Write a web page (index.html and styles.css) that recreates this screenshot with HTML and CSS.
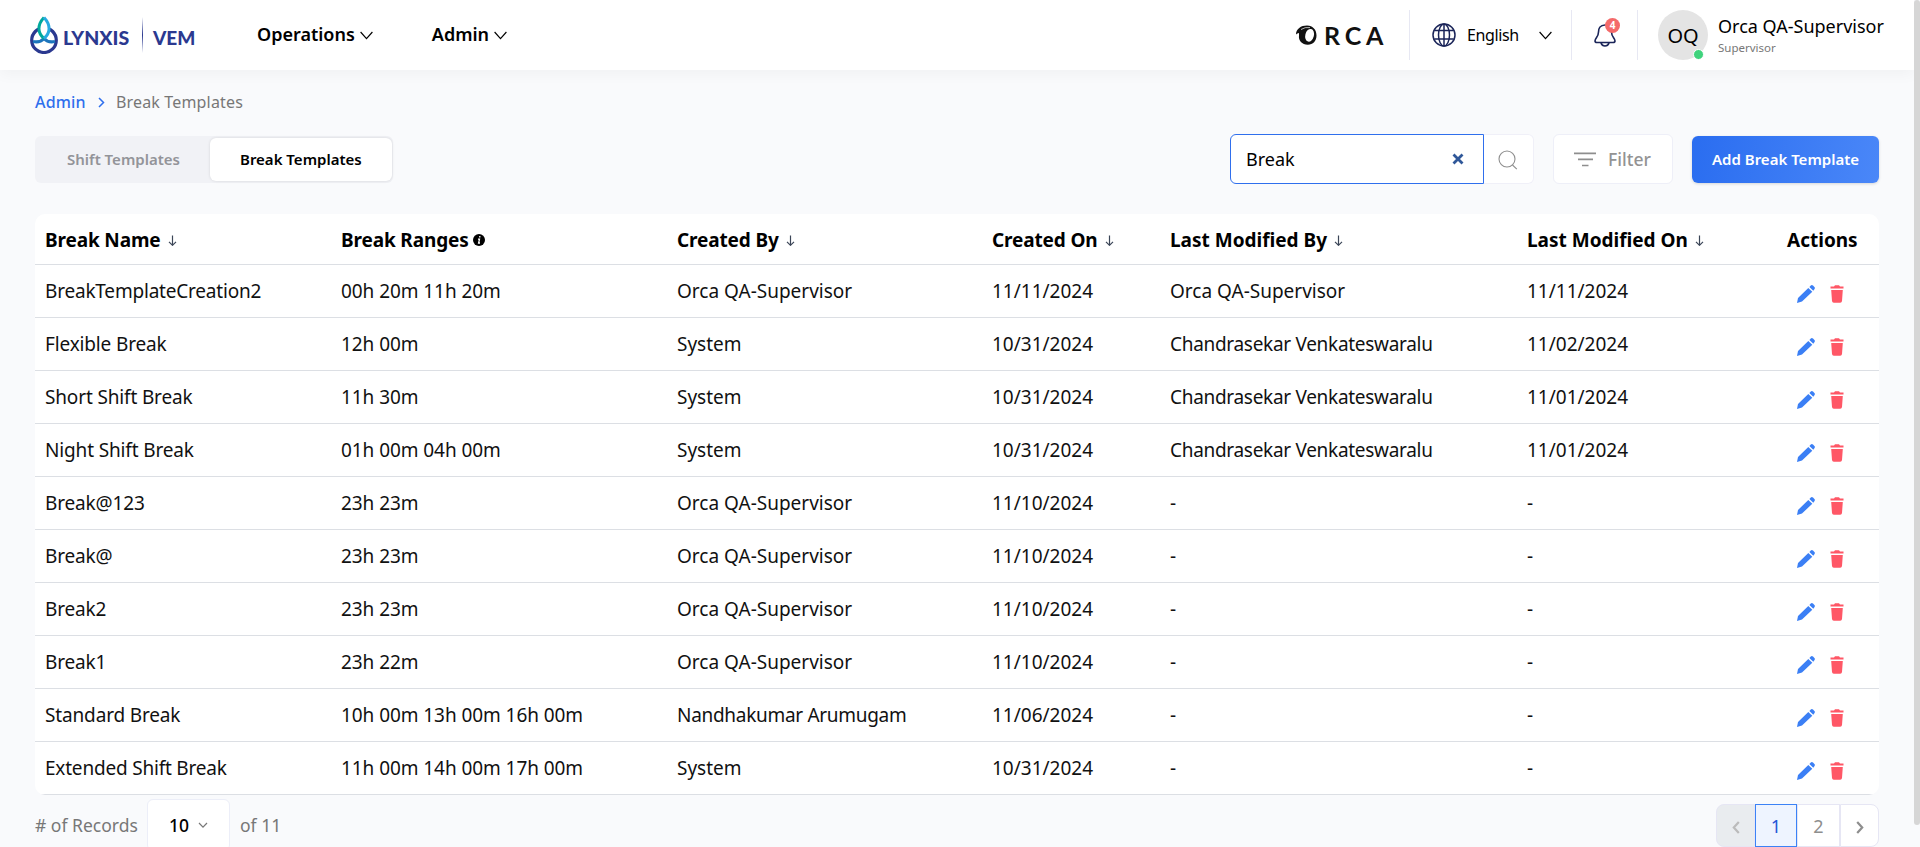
FILE: index.html
```
<!DOCTYPE html>
<html lang="en">
<head>
<meta charset="utf-8">
<title>Break Templates</title>
<link rel="stylesheet" href="styles.css">
</head>
<body>
<svg class="defs" width="0" height="0">
  <symbol id="chev" viewBox="0 0 13 9"><path d="M.6 1l5.900 6.600L12.400 1" fill="none" stroke="currentColor" stroke-width="1.150"/></symbol>
  <symbol id="down" viewBox="0 0 9 11"><path d="M4.500 .5v9.600M1 6.800l3.500 3.500L8 6.800" fill="none" stroke="currentColor" stroke-width="1.200"/></symbol>
  <symbol id="pencil" viewBox="0 0 18 18"><path d="M0 18l1-5L11.300 3l4 3.800L5 16.500z M12.400 2l1.400-1.400q1-1 2.200 0l1.400 1.400q1 1.100 0 2.200L16.300 5.700z" fill="#3b7ff5"/></symbol>
  <symbol id="trash" viewBox="0 0 14 18"><path d="M.5 1.500H4L5 .3h4l1 1.200h3.500v1.900H.5zM1.200 5h11.600L12 16q-.2 1.700-1.800 1.700H3.800Q2.200 17.700 2 16z" fill="#ff5766"/></symbol>
</svg>
<header class="topbar">
  <div class="brand">
    <svg class="drop" width="28" height="38" viewBox="0 0 28 38">
      <circle cx="14" cy="24.200" r="12.300" fill="#fff" stroke="#2b3990" stroke-width="3.200"/>
      <path d="M14 1C6 9 6 17 14 23C22 17 22 9 14 1z" fill="#fff"/>
      <path d="M3 25.500Q10 27 14 22.500Q18 27 25 25.500" fill="none" stroke="#1c75bc" stroke-width="3"/>
      <path d="M14 1.500C7 9 7.500 17 14 22.500" fill="none" stroke="#00a99d" stroke-width="3"/>
      <path d="M14 1.500C21 9 20.500 17 14 22.500" fill="none" stroke="#27aae1" stroke-width="3"/>
    </svg>
    <span class="word lynxis">LYNXIS</span>
    <span class="rule"></span>
    <span class="word vem">VEM</span>
  </div>
  <nav class="menu">
    <a><span>Operations</span><svg width="13" height="9"><use href="#chev"/></svg></a>
    <a><span>Admin</span><svg width="13" height="9"><use href="#chev"/></svg></a>
  </nav>
  <div class="orca">
    <svg width="21" height="20" viewBox="0 0 21 20"><path d="M0 9.500C0 4 5 .6 11 .6C17 .6 20.500 5 20.500 10.500S17 19.700 11.800 19.700C6 19.700 2.200 15.500 3 10.500L3 8Q1.200 8 0 9.500z" fill="#111"/><ellipse cx="13.600" cy="10.300" rx="4.300" ry="6.500" transform="rotate(14 13.600 10.300)" fill="#fff"/><path d="M5 4.500Q9 1.800 14 2.600" fill="none" stroke="#fff" stroke-width=".7"/></svg>
    <span>RCA</span>
  </div>
  <div class="lang">
    <svg width="24" height="24" viewBox="0 0 24 24" fill="none" stroke="#1b2559" stroke-width="1.500"><circle cx="12" cy="12" r="11"/><ellipse cx="12" cy="12" rx="5.500" ry="11"/><path d="M12 1v22M2.200 7.500h19.600M2.200 16h19.600"/></svg>
    <span>English</span>
    <svg width="13" height="9"><use href="#chev"/></svg>
  </div>
  <div class="bell">
    <svg width="22" height="24" viewBox="0 0 22 24" fill="none" stroke="#1b2559" stroke-width="1.600"><path d="M11 2C6 2 4.500 5.500 4.500 9C4.500 14 1 15 1 18C1 19.500 2 19.500 3 19.500H19C20 19.500 21 19.500 21 18C21 15 17.500 14 17.500 9C17.500 5.500 16 2 11 2zM7 20Q8 23 11 23T15 20"/></svg>
    <b>4</b>
  </div>
  <div class="user">
    <div class="avatar"><span>OQ</span><i></i></div>
    <div class="who"><span class="name">Orca QA-Supervisor</span><span class="role">Supervisor</span></div>
  </div>
</header>
<main>
  <div class="crumbs"><a>Admin</a><svg width="7" height="11" viewBox="0 0 7 11"><path d="M1 1l4.500 4.500L1 10" fill="none" stroke="#2f6fed" stroke-width="1.500"/></svg><span>Break Templates</span></div>
  <div class="tools">
    <div class="tabs"><span class="tab off">Shift Templates</span><span class="tab on">Break Templates</span></div>
    <div class="search">
      <div class="field"><span>Break</span><svg width="12" height="12" viewBox="0 0 12 12"><path d="M1.500 1.500l9 9M10.500 1.500l-9 9" stroke="#2f5799" stroke-width="2.800"/></svg></div>
      <div class="go"><svg width="20" height="20" viewBox="0 0 20 20" fill="none" stroke="#8e8e8e" stroke-width="1.100"><circle cx="9" cy="9" r="8"/><path d="M14.500 15l4.300 4.200"/></svg></div>
    </div>
    <div class="filter"><svg width="22" height="15" viewBox="0 0 22 15"><path d="M0 1.300h22M4 7.300h15M8 13.500h6.500" stroke="#8e8e8e" stroke-width="1.700"/></svg><span>Filter</span></div>
    <div class="add"><span>Add Break Template</span></div>
  </div>
  <section class="table" id="table">
    <div class="row head">
      <div><span class="snug">Break Name</span><svg width="9" height="11"><use href="#down"/></svg></div>
      <div><span class="snug">Break Ranges</span><svg class="info" width="12" height="12" viewBox="0 0 12 12"><circle cx="6" cy="6" r="6"/><path d="M6.800 2v1.600M5 5.200h1.500L5.600 9H7" fill="none" stroke="#fff" stroke-width="1.300"/></svg></div>
      <div><span class="snug">Created By</span><svg width="9" height="11"><use href="#down"/></svg></div>
      <div><span class="snug">Created On</span><svg width="9" height="11"><use href="#down"/></svg></div>
      <div><span>Last Modified By</span><svg width="9" height="11"><use href="#down"/></svg></div>
      <div><span>Last Modified On</span><svg width="9" height="11"><use href="#down"/></svg></div>
      <div><span>Actions</span></div>
    </div>
  </section>
  <footer class="foot">
    <span class="t-rec"># of Records</span>
    <div class="size"><span>10</span><svg width="10" height="7" viewBox="0 0 10 7"><path d="M1 1l4 4.200L9 1" fill="none" stroke="#777" stroke-width="1.200"/></svg></div>
    <span>of 11</span>
    <div class="pages">
      <span class="prev"><svg width="8" height="13" viewBox="0 0 8 13"><path d="M6.800 1L1.800 6.500l5 5.500" fill="none" stroke="#bbb" stroke-width="2.200"/></svg></span>
      <span class="cur">1</span><span class="two">2</span>
      <span class="next"><svg width="8" height="13" viewBox="0 0 8 13"><path d="M1.200 1l5 5.500-5 5.500" fill="none" stroke="#8e8e8e" stroke-width="2.200"/></svg></span>
    </div>
  </footer>
</main>
<div class="scroll"></div>
<script src="rows.js"></script>
</body>
</html>
```
FILE: styles.css
```
* { box-sizing: border-box; }
html, body { height: 847px; overflow: hidden; }
body { margin: 0; background: #f9fafc; font-family: "Noto Sans", sans-serif; color: #000; font-size: 16px; }
svg { display: block; flex: none; }
.defs { position: absolute; }
span { white-space: nowrap; }
.topbar { height: 70px; width: 1914px; background: #fff; display: flex; align-items: center; padding-left: 30px; box-shadow: 0 4px 14px rgba(0,0,0,.04); }
.brand { display: flex; align-items: center; width: 227px; height: 70px; }
.drop { margin-right: 5px; }
.word { font-family: Lato, sans-serif; font-weight: 900; font-size: 19.5px; line-height: 20px; color: #2b3990; margin-top: 6px; }
.lynxis { width: 79px; }
.vem { font-size: 19px; }
.rule { width: 1px; height: 36px; background: linear-gradient(#fff, #2b3990, #fff); margin-right: 10px; }
.menu { display: flex; gap: 59px; flex: 1; font-weight: 600; font-size: 18px; }
.menu a { display: flex; align-items: center; gap: 5px; line-height: 24px; }
.menu span { margin-top: -2px; }
.orca { display: flex; align-items: center; gap: 7px; width: 113px; font: 700 25px/24px Lato, sans-serif; letter-spacing: 4.8px; color: #111; }
.lang { display: flex; align-items: center; border-left: 1px solid #e7e8f3; width: 162px; height: 50px; padding-left: 22px; }
.lang span { margin-left: 11px; width: 72px; letter-spacing: -.4px; }
.bell { position: relative; width: 66px; height: 50px; border-left: 1px solid #e7e8f3; padding: 13px 0 0 22px; }
.bell b { position: absolute; left: 33px; top: 8px; width: 15px; height: 15px; border-radius: 50%; background: #f46a6a; color: #fff; font-size: 10px; line-height: 15px; text-align: center; }
.user { display: flex; border-left: 1px solid #e7e8f3; width: 277px; height: 50px; padding-left: 20px; }
.avatar { position: relative; width: 50px; height: 50px; border-radius: 50%; background: #e4e4e4; font-size: 20px; line-height: 52px; text-align: center; }
.avatar i { position: absolute; left: 35px; top: 39px; width: 11px; height: 11px; border-radius: 50%; background: #3fd37c; border: 1px solid #fff; }
.who { margin-left: 10px; display: flex; flex-direction: column; }
.name { font-size: 18px; line-height: 24px; margin-top: 4px; }
.role { font-size: 11.5px; line-height: 16px; margin-top: 2px; color: #777; }
main { width: 1879px; padding-left: 35px; display: flex; flex-direction: column; }
.crumbs { display: flex; align-items: center; height: 24px; margin-top: 20px; color: #777; letter-spacing: .16px; }
.crumbs a { width: 63px; color: #2f6fed; font-weight: 500; }
.crumbs svg { margin-right: 11px; }
.tools { display: flex; align-items: center; height: 50px; margin-top: 20px; }
.tabs { display: flex; align-items: center; width: 358px; height: 47px; background: #f1f2f6; border-radius: 6px; padding-right: 1px; font-size: 15px; font-weight: 600; }
.tab { height: 43px; display: flex; align-items: center; }
.off { width: 175px; padding-left: 32px; color: #939499; }
.on { flex: 1; padding-left: 30px; background: #fff; border-radius: 6px; box-shadow: 0 0 3px rgba(0,0,0,.12); }
.search { display: flex; width: 304px; height: 50px; margin-left: auto; }
.field { display: flex; align-items: center; justify-content: space-between; width: 254px; background: #fff; border: 1px solid #2f6fed; border-radius: 6px 0 0 6px; padding: 0 19px 0 15px; }
.field span { font-size: 18px; margin-top: -1px; }
.go { flex: 1; background: #fff; border: 1px solid #f0f0f8; border-left: 0; border-radius: 0 6px 6px 0; padding: 15px 0 0 14px; }
.filter { display: flex; align-items: center; gap: 12px; width: 120px; height: 50px; margin: 0 19px; background: #fff; border: 1px solid #eeeff8; border-radius: 6px; padding-left: 20px; color: #939393; font-size: 17.5px; font-weight: 500; }
.add { width: 187px; height: 47px; border-radius: 6px; background: linear-gradient(100deg, #2a6df0, #4a87f8); color: #fff; font-size: 15px; font-weight: 600; display: flex; align-items: center; padding-left: 20px; box-shadow: 0 1px 3px rgba(0,0,0,.15); }
.table { margin-top: 30px; background: #fff; border-radius: 10px; overflow: hidden; }
.row { display: grid; grid-template-columns: 296px 336px 315px 178px 357px 260px 1fr; height: 53px; border-bottom: 1px solid #dcdfe4; font-size: 19px; color: #111; }
.row > div { display: flex; align-items: center; padding-left: 10px; }
.row .c1 { letter-spacing: -.15px; }
.row .c2 { letter-spacing: -.07px; }
.row .tight { letter-spacing: -.3px; }
.row .c1.tight { letter-spacing: -.2px; }
.head { height: 51px; font-weight: 700; color: #000; }
.head span { margin-top: 1px; }
.head .snug { letter-spacing: -.14px; }
.head svg { margin: 2px 0 0 7px; color: #3b4557; }
.head .info { margin: 2px 0 0 4px; color: #000; }
.row .acts { padding: 6px 0 0 20px; gap: 15px; }
.foot { display: flex; align-items: center; height: 60px; color: #777; font-size: 17.5px; }
.foot > span { margin-top: -1px; }
.t-rec { width: 112px; }
.size { width: 83px; height: 52px; background: #fff; border: 1px solid #eceef8; border-radius: 6px; display: flex; align-items: center; gap: 9px; padding-left: 21px; color: #000; font-weight: 500; margin-right: 10px; }
.pages { display: flex; height: 43px; margin: 1px 0 0 auto; font-size: 18px; }
.pages span { display: flex; align-items: center; justify-content: center; background: #fff; border: 1px solid #e6e6f4; }
.pages svg { margin-top: 3px; }
.pages .prev { width: 39px; background: #e9ecef; border-radius: 8px 0 0 8px; }
.pages .cur { width: 42px; background: #eef4ff; border-color: #3b82f6; color: #2454d6; }
.pages .two { width: 43px; color: #8e8e8e; }
.pages .next { width: 39px; border-radius: 0 8px 8px 0; }
.scroll { position: fixed; right: 0; top: 0; width: 6px; height: 825px; background: #d6d6d6; border-radius: 3px; }
```
FILE: rows.js
```
const rows = [
  ["BreakTemplateCreation2", "00h 20m 11h 20m", "Orca QA-Supervisor", "11/11/2024", "Orca QA-Supervisor", "11/11/2024"],
  ["Flexible Break", "12h 00m", "System", "10/31/2024", "Chandrasekar Venkateswaralu", "11/02/2024"],
  ["Short Shift Break", "11h 30m", "System", "10/31/2024", "Chandrasekar Venkateswaralu", "11/01/2024"],
  ["Night Shift Break", "01h 00m 04h 00m", "System", "10/31/2024", "Chandrasekar Venkateswaralu", "11/01/2024"],
  ["Break@123", "23h 23m", "Orca QA-Supervisor", "11/10/2024", "-", "-"],
  ["Break@", "23h 23m", "Orca QA-Supervisor", "11/10/2024", "-", "-"],
  ["Break2", "23h 23m", "Orca QA-Supervisor", "11/10/2024", "-", "-"],
  ["Break1", "23h 22m", "Orca QA-Supervisor", "11/10/2024", "-", "-"],
  ["Standard Break", "10h 00m 13h 00m 16h 00m", "Nandhakumar Arumugam", "11/06/2024", "-", "-"],
  ["Extended Shift Break", "11h 00m 14h 00m 17h 00m", "System", "10/31/2024", "-", "-"]
];
const actions = '<div class="acts"><svg width="18" height="18"><use href="#pencil"/></svg><svg width="14" height="18"><use href="#trash"/></svg></div>';
// Long names are set slightly tighter
const cell = (text, i) => {
  const tight = i !== 1 && text.length > 19 ? " tight" : "";
  return `<div><span class="c${i + 1}${tight}">${text}</span></div>`;
};
document.getElementById("table").insertAdjacentHTML("beforeend",
  rows.map(r => '<div class="row">' + r.map(cell).join("") + actions + "</div>").join(""));
```
